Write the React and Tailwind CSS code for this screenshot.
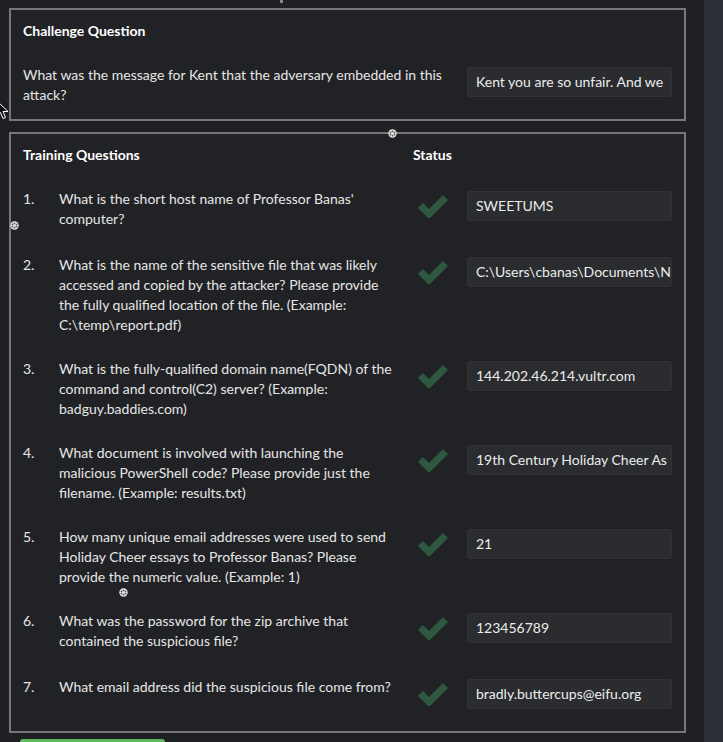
import React from 'react';

const questions = [
  {
    n: '1.',
    q: "What is the short host name of Professor Banas' computer?",
    a: 'SWEETUMS',
  },
  {
    n: '2.',
    q: 'What is the name of the sensitive file that was likely accessed and copied by the attacker? Please provide the fully qualified location of the file. (Example: C:\\temp\\report.pdf)',
    a: 'C:\\Users\\cbanas\\Documents\\N',
  },
  {
    n: '3.',
    q: 'What is the fully-qualified domain name(FQDN) of the command and control(C2) server? (Example: badguy.baddies.com)',
    a: '144.202.46.214.vultr.com',
  },
  {
    n: '4.',
    q: 'What document is involved with launching the malicious PowerShell code? Please provide just the filename. (Example: results.txt)',
    a: '19th Century Holiday Cheer As',
  },
  {
    n: '5.',
    q: 'How many unique email addresses were used to send Holiday Cheer essays to Professor Banas? Please provide the numeric value. (Example: 1)',
    a: '21',
  },
  {
    n: '6.',
    q: 'What was the password for the zip archive that contained the suspicious file?',
    a: '123456789',
  },
  {
    n: '7.',
    q: 'What email address did the suspicious file come from?',
    a: 'bradly.buttercups@eifu.org',
  },
];

// --- SMALL PIECES ---
const Check = () => (
  <svg width="30" height="24" viewBox="0 0 30 24" className="block">
    <path d="M2.5 11.5 L11 20 L27.5 3.5" fill="none" stroke="#2e5840" strokeWidth="7" />
  </svg>
);

// answer box; text is what shows inside the field
const Answer = ({ value }) => (
  <div className="w-[205px] h-[30px] mt-[2px] rounded-[2px] bg-[#2a2c2f] border border-[#303236] px-[8px] flex items-center overflow-hidden whitespace-nowrap text-[14px] text-[#ececec]">
    {value}
  </div>
);

const Snow = ({ className }) => (
  <svg className={`absolute ${className}`} width="9" height="9" viewBox="0 0 9 9">
    <circle cx="4.5" cy="4.5" r="4.2" fill="#e8e8e8" />
    <circle cx="4.5" cy="2.3" r="0.9" fill="#555" />
    <circle cx="4.5" cy="6.7" r="0.9" fill="#555" />
    <circle cx="2.5" cy="3.4" r="0.9" fill="#555" />
    <circle cx="6.5" cy="3.4" r="0.9" fill="#555" />
    <circle cx="2.5" cy="5.6" r="0.9" fill="#555" />
    <circle cx="6.5" cy="5.6" r="0.9" fill="#555" />
  </svg>
);

export default function App() {
  return (
    <div className="relative h-[742px] overflow-hidden flex bg-[#1f2023] text-[#e6e6e6] font-['Lato','Noto_Sans',sans-serif] text-[14px] leading-5">
      <main className="flex-1 pl-[9px] pr-[18px] pt-[8px]">
        {/* challenge */}
        <section className="border-2 border-[#777] bg-[#212225] px-[12px] pt-[11px] pb-[12px]">
          <h2 className="font-bold text-white">Challenge Question</h2>
          <div className="mt-6 flex min-h-[42px]">
            <p className="w-[430px]">What was the message for Kent that the adversary embedded in this attack?</p>
            <div className="ml-auto">
              <Answer value="Kent you are so unfair. And we" />
            </div>
          </div>
        </section>

        {/* training */}
        <section className="mt-[11px] border-2 border-[#777] bg-[#212225] px-[12px] pt-[11px] pb-[12px]">
          <div className="flex font-bold text-white">
            <h2 className="w-[390px]">Training Questions</h2>
            <h2>Status</h2>
          </div>
          <div className="mt-6 flex flex-col gap-6">
            {questions.map(item => (
              <div key={item.n} className="flex min-h-[42px]">
                <span className="w-[36px] shrink-0">{item.n}</span>
                <p className="w-[338px] shrink-0">{item.q}</p>
                <div className="w-[70px] shrink-0 pl-[21px] pt-[5px]">
                  <Check />
                </div>
                <Answer value={item.a} />
              </div>
            ))}
          </div>
        </section>

        <div className="mt-[6px] ml-[11px] w-[145px] h-[30px] rounded-[3px] bg-[#5cb85c]" />
      </main>
      <aside className="w-[19px] bg-[#2c2f36]" />

      {/* overlays */}
      <div className="absolute left-[280px] top-0 w-[3px] h-[3px] bg-[#888]" />
      <Snow className="left-[388px] top-[129px]" />
      <Snow className="left-[10px] top-[221px]" />
      <Snow className="left-[119px] top-[588px]" />
      <svg className="absolute left-[-4px] top-[100px]" width="13" height="20" viewBox="0 0 13 20">
        <path d="M1 1 L1 16 L4.5 12.5 L7 18.5 L9.5 17.5 L7 11.5 L12 11.5 Z" fill="#111" stroke="#fff" strokeWidth="1" />
      </svg>
    </div>
  );
}
